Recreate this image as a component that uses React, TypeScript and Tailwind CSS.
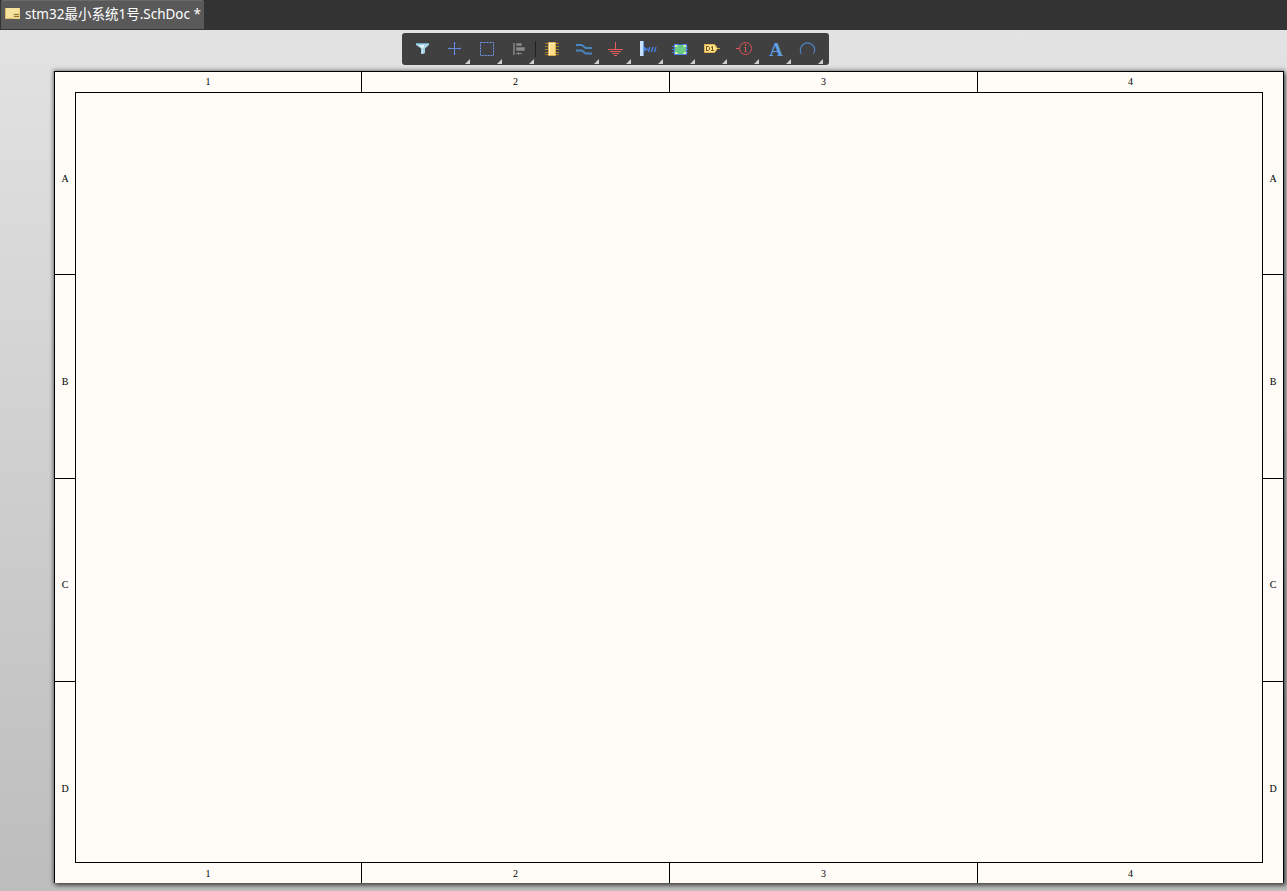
import React from "react";

const Tool = ({ children, menu = true, divided = false }: { children: React.ReactNode; menu?: boolean; divided?: boolean }) => (
  <button className={divided ? "ml-px h-8 w-8 shrink-0" : "h-8 w-8 shrink-0"}>
    <svg width="32" height="32" viewBox="0 0 32 32" fill="none" className="block">
      {divided && <path d="M0.5 8v16" stroke="#202020" />}
      {children}
      {menu && <path d="M32 26v5h-5z" fill="#d0d0d0" />}
    </svg>
  </button>
);

const Toolbar = () => (
  <div className="flex h-8 w-[427px] shrink-0 rounded-[3px] bg-[#404040] pl-1">
    <Tool menu={false}>
      <path d="M10 10h13v2l-4 3.500V20l-2 1h-2v-5.500L10 12z" fill="#a9d3e2" />
      <path d="M10 10.500h13" stroke="#6fa9c0" />
      <path d="M13 12h5v2l-1.500 1v5H16v-5z" fill="#e6f7fb" />
    </Tool>
    <Tool>
      <path d="M10 15.500h13M16.500 9v13" stroke="#6688dd" />
      <path d="M11.500 14v3M21.500 14v3M15 10.500h3M15 20.500h3" stroke="#6688dd" strokeOpacity="0.350" />
    </Tool>
    <Tool>
      <rect x="10.500" y="9.500" width="13" height="13" stroke="#7296ee" strokeDasharray="2 1" />
    </Tool>
    <Tool>
      <path d="M11 10h2v12h-2z" fill="#747474" />
      <path d="M14.500 10.500h5v2h-5zM14.500 14.500h8v3h-8z" fill="#8b8b8b" stroke="#747474" />
      <path d="M14 20.500h6M16.500 19v3" stroke="#858585" />
    </Tool>
    <Tool menu={false} divided>
      <path d="M10 10.500h14M10 13.500h14M10 16.500h14M10 19.500h14M10 21.500h14" stroke="#a37d2c" />
      <rect x="13.500" y="9.500" width="7" height="13" fill="#ffdc87" stroke="#dca94d" />
      <path d="M14.500 10v12M14 10.500h6" stroke="#fff4d5" />
    </Tool>
    <Tool>
      <path d="M9 11h6l4 3h6v2h-6.500l-4-3H9zM9 16.500h6l4 3h6v2h-6.500l-4-3H9z" fill="#4686c1" />
    </Tool>
    <Tool>
      <path d="M16.500 9v7M9 16.500h15M11 18.500h11M13 20.500h7M15 22.500h3" stroke="#e65c5c" />
    </Tool>
    <Tool>
      <path d="M9 8h4v15H9z" fill="#c7e0ff" />
      <path d="M12.500 8v15" stroke="#6ea1eb" />
      <path d="M13 13v6l3-3z" fill="#4779da" />
      <path d="M15 16.500h2.500M17.500 19l1.500-5M20.500 19l1.500-5M23.500 19l1.500-5" stroke="#4779da" strokeWidth="1.500" />
    </Tool>
    <Tool>
      <path d="M9 13.500h16M9 16.500h16M9 19.500h16" stroke="#477cd8" />
      <rect x="11.500" y="11.500" width="12" height="10" fill="#69c985" stroke="#5282e8" />
      <path d="M12 12h3l-1 2h-2zM20 12h3v2h-2zM12 19h2l1 2h-3zM21 19h2v2h-3z" fill="#d8f5aa" />
      <path d="M15.500 11.500h4" stroke="#315fc3" />
    </Tool>
    <Tool>
      <path d="M21 15.500h4" stroke="#dda944" />
      <path d="M9.500 11.500h10l3 4-3 4h-10z" fill="#ffe28b" stroke="#e2b250" />
      <path d="M11.500 13v5M11 13.500h2.500l1 1v2l-1 1H11M16 14.500l1.500-1v4.500M16 17.500h3" stroke="#705316" />
    </Tool>
    <Tool>
      <circle cx="18.500" cy="15.500" r="6" stroke="#d95358" />
      <path d="M9 15.500h3.500M18.500 14v5M18.500 11v2M17.500 14.500h1M17.500 18.500h2" stroke="#e1575b" />
    </Tool>
    <Tool>
      <text x="17" y="22.500" textAnchor="middle" className="fill-[#5f9fe6] font-['Liberation_Serif',serif] text-[19px] font-bold">A</text>
    </Tool>
    <Tool>
      <path d="M10.500 21C8.500 18 9 14 12 11.500s7-2 9.500.500 2.500 6 1 8.500" stroke="#4f84c4" strokeWidth="1.200" />
    </Tool>
  </div>
);

const Columns = ({ bottom = false }: { bottom?: boolean }) => (
  <div className={bottom ? "flex h-5 shrink-0 leading-[22px]" : "flex h-5 shrink-0 leading-[20px]"}>
    {["1", "2", "3", "4"].map((n) => (
      <div
        key={n}
        className="h-full w-[308px] border-r border-black text-center first:w-[307px] last:w-[305px] last:border-r-0"
      >
        {n}
      </div>
    ))}
  </div>
);

const Rows = () => (
  <div className="-my-5 flex w-5 shrink-0 flex-col">
    {["A", "B", "C", "D"].map((n) => (
      <div
        key={n}
        className="flex h-[203px] w-full items-center justify-center border-b border-black pt-[11px] nth-[2]:h-[204px] nth-[2]:pt-[10px] nth-[3]:pt-[10px] last:h-[201px] last:border-b-0 last:pt-[12px]"
      >
        <span>{n}</span>
      </div>
    ))}
  </div>
);

export default function App() {
  return (
    <div className="flex h-[891px] w-[1287px] flex-col overflow-hidden bg-linear-to-b from-[#e4e4e4] to-[#bdbdbd]">
      <header className="flex h-[30px] shrink-0 bg-[#333333] pb-px pl-px">
        <div className="flex h-[29px] w-[203px] items-center rounded-t-[2px] border-t border-[#6a6a6a] bg-[#595959] pl-1">
          <svg width="15" height="12" viewBox="0 0 15 12" className="-mt-[2px] shrink-0">
            <rect width="15" height="11" fill="#f7e3a0" />
            <path d="M.5 0v10.500H15V0" fill="none" stroke="#d9b965" />
            <path d="M8 5h7v6H8z" fill="#ecd083" />
            <path d="M9 6.500h5M9 8.500h5" stroke="#8f743c" />
          </svg>
          <span className="-mt-[2px] ml-[5px] whitespace-nowrap font-['Noto_Sans','Noto_Sans_CJK_SC',sans-serif] text-[13.500px] leading-[28px] text-white">
            stm32最小系统1号.SchDoc *
          </span>
        </div>
      </header>
      <div className="flex h-[41px] shrink-0 pt-[3px] pl-[402px]">
        <Toolbar />
      </div>
      <main className="pl-[54px]">
        <div className="flex h-[812px] w-[1230px] flex-col border-x border-t border-black bg-[#fffcf7] font-['Liberation_Serif',serif] text-[10px] leading-none text-black shadow-[0_0_4px_1px_rgba(0,0,0,0.45),2px_3px_4px_rgba(0,0,0,0.4)]">
          <Columns />
          <div className="flex h-[771px] shrink-0">
            <Rows />
            <div className="h-full w-[1188px] shrink-0 border border-black" />
            <Rows />
          </div>
          <Columns bottom />
        </div>
      </main>
    </div>
  );
}
